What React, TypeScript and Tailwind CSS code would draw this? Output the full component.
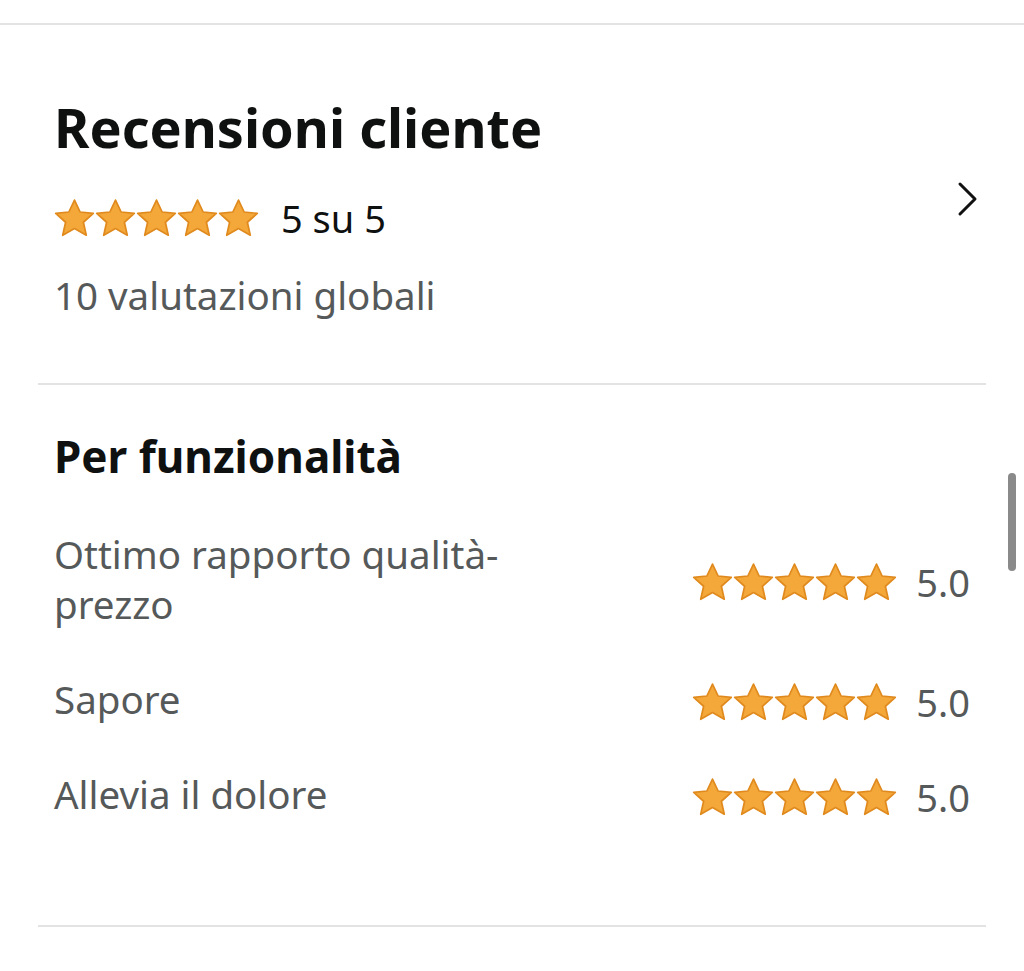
import React from 'react';

const Star = ({ size }: { size: number }) => (
  <svg width={size} height={size} viewBox="0 0 24 24">
    <path
      d="M12 1.2l3.3 7 7.7.8-5.8 5.2 1.7 7.6L12 17.9l-6.9 3.9 1.7-7.6L1 9l7.7-.8z"
      fill="#f4a83a"
      stroke="#e08a1e"
      strokeWidth="1"
      strokeLinejoin="round"
    />
  </svg>
);

const Stars = ({ size }: { size: number }) => (
  <div className="flex items-center">
    {[0, 1, 2, 3, 4].map(i => (
      <Star key={i} size={size} />
    ))}
  </div>
);

const features = [
  { label: 'Ottimo rapporto qualità-\nprezzo', score: '5.0' },
  { label: 'Sapore', score: '5.0' },
  { label: 'Allevia il dolore', score: '5.0' },
];

const App = () => {
  return (
    <div className="relative w-[1024px] h-[971px] bg-white overflow-hidden font-['Noto_Sans',sans-serif]">
      <div className="pt-[23px]">
        <div className="h-[2px] bg-[#e3e3e3]" />
      </div>

      <div className="px-[54px] pt-[70px] flex justify-between">
        <div>
          <h2 className="text-[54px] leading-[64px] font-bold text-[#0f1111]">Recensioni cliente</h2>
          <div className="flex items-center gap-[22px] mt-[36px]">
            <Stars size={41} />
            <span className="text-[38px] leading-[46px] text-[#0f1111]">5 su 5</span>
          </div>
          <p className="text-[38.5px] leading-[46px] text-[#565959] mt-[31px]">10 valutazioni globali</p>
        </div>
        <div className="pt-[86px] -mr-[10px]">
          <svg width="24" height="36" viewBox="0 0 24 36" fill="none">
            <path d="M4 3l15 15-15 15" stroke="#111" strokeWidth="3" strokeLinecap="round" strokeLinejoin="round" />
          </svg>
        </div>
      </div>

      <div className="mx-[38px] mt-[65px] h-[2px] bg-[#e3e3e3]" />

      <div className="px-[54px] pt-[45px]">
        <h3 className="text-[44px] leading-[52px] font-bold text-[#0f1111]">Per funzionalità</h3>
        <div className="mt-[47px] flex flex-col gap-[45px]">
          {features.map((f, i) => (
            <div key={i} className="flex items-center justify-between">
              <p className="text-[38.5px] leading-[50px] text-[#565959] whitespace-pre-line">{f.label}</p>
              <div className="flex items-center gap-[19px] pt-[6px]">
                <Stars size={41} />
                <span className="text-[38px] leading-[44px] text-[#565959]">{f.score}</span>
              </div>
            </div>
          ))}
        </div>
      </div>

      <div className="mx-[38px] mt-[106px] h-[2px] bg-[#e3e3e3]" />

      <div className="absolute right-[8px] top-[473px] w-[8px] h-[98px] rounded-full bg-[#8a8a8a]" />
    </div>
  );
};

export default App;
